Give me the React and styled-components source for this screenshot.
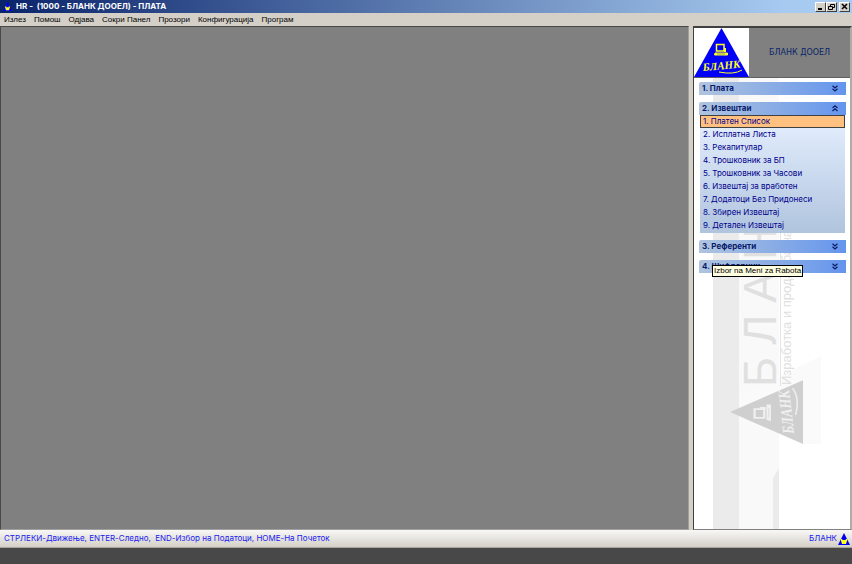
import React, { useState } from "react";
import styled, { createGlobalStyle } from "styled-components";

const Global = createGlobalStyle`
  *, *::before, *::after { box-sizing: border-box; }
  body { margin: 0; font: 8px/13px Inter, sans-serif; color: #000; }
  button { font: inherit; color: inherit; margin: 0; padding: 0; border: 0; background: none; white-space: nowrap; }
  ul { list-style: none; margin: 0; padding: 0; }
`;

const Shell = styled.div`
  display: flex;
  flex-direction: column;
  min-height: 100vh;
  background: #484848;
`;

const TitleBar = styled.header`
  display: flex;
  align-items: center;
  height: 13px;
  padding: 0 2px 0 3px;
  gap: 4px;
  background: linear-gradient(90deg, #0a246a, #a6caf0 92%);
`;

const Title = styled.h1`
  flex: 1;
  margin: 0;
  font: bold 8px/13px Inter, sans-serif;
  color: #fff;
  white-space: pre;
`;

const Controls = styled.div`
  display: flex;
`;

const ControlButton = styled.button`
  display: flex;
  width: 11px;
  height: 10px;
  margin-left: ${(p) => (p.$apart ? "2px" : "0")};
  background: #d4d0c8;
  border: 1px solid;
  border-color: #fff #404040 #404040 #fff;
`;

const MenuBar = styled.nav`
  display: flex;
  gap: 8px;
  height: 13px;
  padding-left: 4px;
  font-family: "Liberation Sans", sans-serif;
  background: #d4d0c8;
`;

const MenuItem = styled.button`
  line-height: 13px;
`;

const Work = styled.div`
  flex: 1;
  display: grid;
  grid-template-columns: 1fr 159px;
  gap: 4px;
  background: #d4d0c8;
`;

const Desktop = styled.main`
  background: #808080;
  border: 1px solid;
  border-color: #484848 #a0a0a0 #a0a0a0 #484848;
`;

const Sidebar = styled.aside`
  display: flex;
  flex-direction: column;
  background: #fff;
  border: solid #404040;
  border-width: 2px 2px 1px 1px;
  border-right-color: #b0aca4;
  border-bottom-color: #808080;
`;

const Brand = styled.div`
  display: flex;
  height: 50px;
  background: #808080;
  border-bottom: 1px solid #606060;
`;

const BrandLogo = styled.div`
  width: 55px;
  background: #fff;
  svg { display: block; }
`;

const BrandName = styled.div`
  flex: 1;
  display: grid;
  place-items: center;
  font-family: "DejaVu Sans", sans-serif;
  color: #0a246a;
`;

const Panel = styled.div`
  position: relative;
  flex: 1;
  padding: 4px 4px 0 5px;
`;

const Watermark = styled.svg`
  position: absolute;
  left: 0;
  top: 0;
  width: 100%;
  height: 100%;
`;

const Groups = styled.div`
  position: relative;
  display: flex;
  flex-direction: column;
  gap: 7px;
  color: #0a1a6a;
`;

const Group = styled.section``;

const GroupHead = styled.button`
  display: flex;
  align-items: center;
  justify-content: space-between;
  width: 100%;
  height: 13px;
  padding: 0 8px 0 3px;
  font-weight: bold;
  border-radius: 2px 0 0 0;
  background: linear-gradient(90deg, #b0c4de, #6495ed);
`;

const Entries = styled.ul`
  margin: 0 1px;
  padding-bottom: 1px;
  background: linear-gradient(#e6f0ff, #b0c4de);
`;

const Entry = styled.button`
  display: block;
  width: 100%;
  height: 13px;
  padding-left: 2px;
  line-height: 11px;
  text-align: left;
  color: #00008b;
  border: 1px solid ${(p) => (p.$active ? "#404040" : "transparent")};
  background: ${(p) => (p.$active ? "#ffc080" : "none")};
`;

const Tooltip = styled.div`
  position: absolute;
  left: 13px;
  bottom: -4px;
  padding: 0 1px;
  font-family: "Liberation Sans", sans-serif;
  line-height: 10px;
  white-space: nowrap;
  color: #000;
  background: #ffffe1;
  border: 1px solid #000;
`;

const StatusBar = styled.footer`
  display: flex;
  justify-content: space-between;
  align-items: center;
  height: 18px;
  margin-bottom: 16px;
  padding: 0 2px 0 4px;
  color: #2020f0;
  white-space: pre;
  background: linear-gradient(#f8f8f6, #d4d0c8);
  border-bottom: 1px solid #a8a49c;
`;

const StatusBrand = styled.span`
  display: flex;
  align-items: center;
  gap: 1px;
`;

const menus = ["Излез", "Помош", "Одјава", "Сокри Панел", "Прозори", "Конфигурација", "Програм"];

const groups = [
  { name: "1. Плата", items: [] },
  {
    name: "2. Извештаи",
    items: [
      "1. Платен Список", "2. Исплатна Листа", "3. Рекапитулар", "4. Трошковник за БП",
      "5. Трошковник за Часови", "6. Извештај за вработен", "7. Додатоци Без Придонеси",
      "8. Збирен Извештај", "9. Детален Извештај",
    ],
  },
  { name: "3. Референти", items: [] },
  { name: "4. Шифрарник", items: [] },
];

function TriangleIcon({ size }) {
  return (
    <svg width={size} height={size} viewBox="0 0 12 12" aria-hidden="true">
      <path d="M6 0L12 12H0Z" fill="#0000f0" />
      <path d="M2.500 6H9.500L8 11H4Z" fill="#ffff20" />
      <path d="M6 3L8 7H4Z" fill="#0000f0" />
    </svg>
  );
}

function Computer({ color, fill }) {
  return (
    <g fill="none" stroke={color}>
      <path d="M22.500 16.500H30V23H22.500Z" strokeWidth="1.500" />
      <path d="M31 20V24" strokeWidth="2" />
      <path d="M21 25H33.500V27H20.500Z" fill={color} />
      <path d="M23 26H31" stroke={fill} strokeOpacity=".4" />
    </g>
  );
}

function Chevron({ up }) {
  return (
    <svg width="6" height="7" viewBox="0 0 6 7" fill="none" stroke="#0a1a6a" strokeWidth="1.200" aria-hidden="true">
      <path d={up ? "M.5 3L3 .8L5.500 3M.5 6L3 3.800L5.500 6" : "M.5 .8L3 3L5.500 .8M.5 3.800L3 6L5.500 3.800"} />
    </svg>
  );
}

function LogoArt({ fill, ink }) {
  return (
    <>
      <path d="M27.500 0L55 49H0Z" fill={fill} />
      <Computer color={ink} fill={fill} />
      <text x="9" y="43" fontSize="11" fontWeight="bold" fontStyle="italic" fontFamily="Liberation Serif, serif" fill={ink} transform="rotate(-5 9 43)">БЛАНК</text>
      <path d="M25 44Q40 47 48 42" fill="none" stroke={ink} />
    </>
  );
}

export default function App() {
  const [open, setOpen] = useState(1);
  const [active, setActive] = useState(0);
  return (
    <Shell>
      <Global />
      <TitleBar>
        <TriangleIcon size={9} />
        <Title>{"HR -  (1000 - БЛАНК ДООЕЛ) - ПЛАТА"}</Title>
        <Controls>
          <ControlButton aria-label="Minimize">
            <svg width="9" height="8"><path d="M2 6H6" stroke="#000" strokeWidth="2" /></svg>
          </ControlButton>
          <ControlButton aria-label="Restore">
            <svg width="9" height="8" fill="none" stroke="#000"><path d="M3.500 3V1.500H7.500V4.500H6M1.500 3.500H5.500V6.500H1.500Z" /></svg>
          </ControlButton>
          <ControlButton aria-label="Close" $apart>
            <svg width="9" height="8"><path d="M2 1L7 6M7 1L2 6" stroke="#000" strokeWidth="1.500" /></svg>
          </ControlButton>
        </Controls>
      </TitleBar>
      <MenuBar>
        {menus.map((m) => <MenuItem key={m}>{m}</MenuItem>)}
      </MenuBar>
      <Work>
        <Desktop />
        <Sidebar>
          <Brand>
            <BrandLogo>
              <svg width="55" height="49" role="img" aria-label="БЛАНК"><LogoArt fill="#0000f8" ink="#ffff20" /></svg>
            </BrandLogo>
            <BrandName>БЛАНК ДООЕЛ</BrandName>
          </Brand>
          <Panel>
            <Watermark aria-hidden="true">
              <rect x="19" width="26" height="100%" fill="#ebebeb" />
              <rect x="45" width="40" height="100%" fill="#f9f9f9" />
              <path d="M79 400L85 390V452H79Z" fill="#ebebeb" />
              <path d="M46 318L127 278V366H109V303L46 332Z" fill="#fafafa" />
              <g fill="#e0e0e0" fontFamily="Liberation Sans, sans-serif">
                <text transform="translate(82 309) rotate(-90)" fontSize="46" letterSpacing="12">БЛАНК</text>
                <text transform="translate(97 307) rotate(-90)" fontSize="13">Изработка и продажба на</text>
              </g>
              <path d="M86.500 150V308" stroke="#e4e4e4" />
              <g transform="translate(36 366) rotate(-90) scale(1.16 1.49)"><LogoArt fill="#cfcfcf" ink="#f0f0f0" /></g>
            </Watermark>
            <Groups>
              {groups.map((g, i) => (
                <Group key={g.name}>
                  <GroupHead aria-expanded={open === i} onClick={() => setOpen(open === i ? -1 : i)}>
                    {g.name}<Chevron up={open === i} />
                  </GroupHead>
                  {open === i && g.items.length > 0 && (
                    <Entries>
                      {g.items.map((t, n) => (
                        <li key={t}><Entry $active={active === n} onClick={() => setActive(n)}>{t}</Entry></li>
                      ))}
                    </Entries>
                  )}
                </Group>
              ))}
              <Tooltip role="tooltip">Izbor na Meni za Rabota</Tooltip>
            </Groups>
          </Panel>
        </Sidebar>
      </Work>
      <StatusBar>
        <span>{"СТРЛЕКИ-Движење, ENTER-Следно,  END-Избор на Податоци, HOME-На Почеток"}</span>
        <StatusBrand>БЛАНК<TriangleIcon size={12} /></StatusBrand>
      </StatusBar>
    </Shell>
  );
}
